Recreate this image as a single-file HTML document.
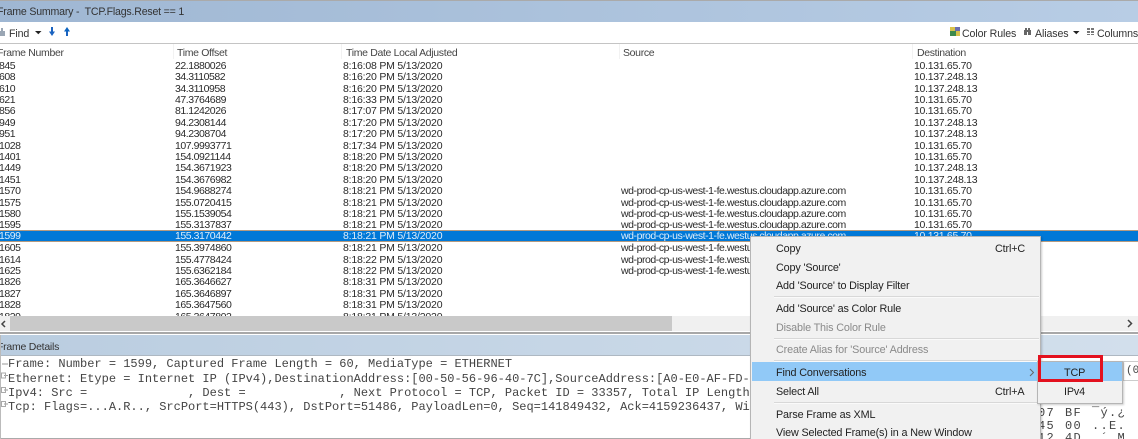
<!DOCTYPE html>
<html><head><meta charset="utf-8"><style>
html,body{margin:0;padding:0;background:#fff}
#p{position:relative;width:1138px;height:439px;overflow:hidden;background:#fff;font:10.5px "Liberation Sans",sans-serif;color:#2a2a2a;filter:blur(.25px)}
#p div{position:absolute;white-space:nowrap}
.r{left:0;width:1138px;height:11.4px;line-height:11.4px}
.r span{position:absolute;top:1.5px}
.a{left:-1px;letter-spacing:-.45px}.b{left:175px;letter-spacing:-.45px}.c{left:343px;letter-spacing:-.2px}.d{left:621px;letter-spacing:-.45px}.e{left:914px;letter-spacing:-.3px}
.s{background:#0078d7;color:#dcecf9;height:10px!important;border-top:1px solid #b49a80;border-bottom:1px solid #b49a80;overflow:hidden}
.s span{top:0!important}
#p .m{font:12px/14px "Liberation Mono",monospace;left:8px;color:#444;white-space:pre}
.h{top:47px;line-height:13px;color:#444;letter-spacing:-.33px}
.i{left:776px;font-size:10.8px;letter-spacing:-.15px;line-height:16px;color:#222}
.k{color:#8a8a8a}
.sp{left:774px;width:265px;height:1px;background:#d8d8d8;border-bottom:1px solid #fafafa}
.x{font:12px/14px "Liberation Mono",monospace;color:#444;letter-spacing:1.300px}
.t{top:26px;line-height:16px;color:#333;font-size:10.6px;letter-spacing:-.1px}
</style></head><body><div id="p">
<div style="left:0;top:0;width:1138px;height:1px;background:#aaa"></div>
<div style="left:0;top:1px;width:1138px;height:21px;background:linear-gradient(90deg,#9fb7d3,#b8cde5)"></div>
<div style="left:-3px;top:4px;font-size:10.6px;line-height:16px;color:#333;letter-spacing:-.2px;white-space:pre">Frame Summary -  TCP.Flags.Reset == 1</div>
<div style="left:0;top:22px;width:1138px;height:21px;background:#fff;border-bottom:1px solid #c4c4c4"></div>
<div class="t" style="left:9px">Find</div>
<svg style="position:absolute;left:0;top:0" width="1138" height="44">
<path d="M1 28h2v3h2v5H0v-5h1z" fill="#9aa6b4"/>
<path d="M35 31h6.500l-3.200 3.200z" fill="#222"/>
<path d="M52 27v5" stroke="#1a63c0" stroke-width="2"/><path d="M49 31.500h6l-3 4.500z" fill="#1a63c0"/>
<path d="M67 36v-5" stroke="#1a63c0" stroke-width="2"/><path d="M64 31.500h6l-3-4.500z" fill="#0a63c0"/>
<rect x="950" y="27" width="10" height="9" fill="#d8c24c"/><rect x="950" y="31" width="6" height="5" fill="#3d8a4c"/><rect x="955" y="27" width="5" height="4" fill="#6a6fb0"/>
<path d="M1025 28h2v2h1v-2h2v2h1v5h-3v-3h-1v3h-3v-5h1z" fill="#666"/>
<path d="M1073 31h6.500l-3.200 3.200z" fill="#222"/>
<path d="M1087 28h3v2h-3zM1091 28h3v2h-3zM1087 31h3v2h-3zM1091 31h3v2h-3zM1087 34h3v1h-3zM1091 34h3v1h-3z" fill="#777"/>
</svg>
<div class="t" style="left:962px">Color Rules</div>
<div class="t" style="left:1035px">Aliases</div>
<div class="t" style="left:1097px">Columns</div>

<div class="h" style="left:-3px">Frame Number</div>
<div class="h" style="left:177px">Time Offset</div>
<div class="h" style="left:346px">Time Date Local Adjusted</div>
<div class="h" style="left:623px">Source</div>
<div class="h" style="left:917px">Destination</div>
<div style="left:173px;top:44px;width:1px;height:15px;background:#f2f2f2"></div>
<div style="left:341px;top:44px;width:1px;height:15px;background:#f2f2f2"></div>
<div style="left:619px;top:44px;width:1px;height:15px;background:#f2f2f2"></div>
<div style="left:912px;top:44px;width:1px;height:15px;background:#f2f2f2"></div>

<div class="r" style="top:59.300px"><span class="a">845</span><span class="b">22.1880026</span><span class="c">8:16:08 PM 5/13/2020</span><span class="e">10.131.65.70</span></div>
<div class="r" style="top:70.700px"><span class="a">608</span><span class="b">34.3110582</span><span class="c">8:16:20 PM 5/13/2020</span><span class="e">10.137.248.13</span></div>
<div class="r" style="top:82.100px"><span class="a">610</span><span class="b">34.3110958</span><span class="c">8:16:20 PM 5/13/2020</span><span class="e">10.137.248.13</span></div>
<div class="r" style="top:93.500px"><span class="a">621</span><span class="b">47.3764689</span><span class="c">8:16:33 PM 5/13/2020</span><span class="e">10.131.65.70</span></div>
<div class="r" style="top:104.900px"><span class="a">856</span><span class="b">81.1242026</span><span class="c">8:17:07 PM 5/13/2020</span><span class="e">10.131.65.70</span></div>
<div class="r" style="top:116.300px"><span class="a">949</span><span class="b">94.2308144</span><span class="c">8:17:20 PM 5/13/2020</span><span class="e">10.137.248.13</span></div>
<div class="r" style="top:127.700px"><span class="a">951</span><span class="b">94.2308704</span><span class="c">8:17:20 PM 5/13/2020</span><span class="e">10.137.248.13</span></div>
<div class="r" style="top:139.100px"><span class="a">1028</span><span class="b">107.9993771</span><span class="c">8:17:34 PM 5/13/2020</span><span class="e">10.131.65.70</span></div>
<div class="r" style="top:150.500px"><span class="a">1401</span><span class="b">154.0921144</span><span class="c">8:18:20 PM 5/13/2020</span><span class="e">10.131.65.70</span></div>
<div class="r" style="top:161.900px"><span class="a">1449</span><span class="b">154.3671923</span><span class="c">8:18:20 PM 5/13/2020</span><span class="e">10.137.248.13</span></div>
<div class="r" style="top:173.300px"><span class="a">1451</span><span class="b">154.3676982</span><span class="c">8:18:20 PM 5/13/2020</span><span class="e">10.137.248.13</span></div>
<div class="r" style="top:184.700px"><span class="a">1570</span><span class="b">154.9688274</span><span class="c">8:18:21 PM 5/13/2020</span><span class="d">wd-prod-cp-us-west-1-fe.westus.cloudapp.azure.com</span><span class="e">10.131.65.70</span></div>
<div class="r" style="top:196.100px"><span class="a">1575</span><span class="b">155.0720415</span><span class="c">8:18:21 PM 5/13/2020</span><span class="d">wd-prod-cp-us-west-1-fe.westus.cloudapp.azure.com</span><span class="e">10.131.65.70</span></div>
<div class="r" style="top:207.500px"><span class="a">1580</span><span class="b">155.1539054</span><span class="c">8:18:21 PM 5/13/2020</span><span class="d">wd-prod-cp-us-west-1-fe.westus.cloudapp.azure.com</span><span class="e">10.131.65.70</span></div>
<div class="r" style="top:218.900px"><span class="a">1595</span><span class="b">155.3137837</span><span class="c">8:18:21 PM 5/13/2020</span><span class="d">wd-prod-cp-us-west-1-fe.westus.cloudapp.azure.com</span><span class="e">10.131.65.70</span></div>
<div class="r s" style="top:230px"><span class="a">1599</span><span class="b">155.3170442</span><span class="c">8:18:21 PM 5/13/2020</span><span class="d">wd-prod-cp-us-west-1-fe.westus.cloudapp.azure.com</span><span class="e">10.131.65.70</span></div>
<div class="r" style="top:241.700px"><span class="a">1605</span><span class="b">155.3974860</span><span class="c">8:18:21 PM 5/13/2020</span><span class="d">wd-prod-cp-us-west-1-fe.westus.cloudapp.azure.com</span></div>
<div class="r" style="top:253.100px"><span class="a">1614</span><span class="b">155.4778424</span><span class="c">8:18:22 PM 5/13/2020</span><span class="d">wd-prod-cp-us-west-1-fe.westus.cloudapp.azure.com</span></div>
<div class="r" style="top:264.500px"><span class="a">1625</span><span class="b">155.6362184</span><span class="c">8:18:22 PM 5/13/2020</span><span class="d">wd-prod-cp-us-west-1-fe.westus.cloudapp.azure.com</span></div>
<div class="r" style="top:275.900px"><span class="a">1826</span><span class="b">165.3646627</span><span class="c">8:18:31 PM 5/13/2020</span></div>
<div class="r" style="top:287.300px"><span class="a">1827</span><span class="b">165.3646897</span><span class="c">8:18:31 PM 5/13/2020</span></div>
<div class="r" style="top:298.700px"><span class="a">1828</span><span class="b">165.3647560</span><span class="c">8:18:31 PM 5/13/2020</span></div>
<div class="r" style="top:310.100px"><span class="a">1829</span><span class="b">165.3647802</span><span class="c">8:18:31 PM 5/13/2020</span></div>

<div style="left:0;top:316px;width:1138px;height:15px;background:#f0f0f0"></div>
<div style="left:10px;top:316px;width:662px;height:15px;background:#c9c9c9"></div>
<svg style="position:absolute;left:0;top:316px" width="1138" height="15"><path d="M5 5l-3 3 3 3M1128 4l3.500 3.500-3.500 3.500" fill="none" stroke="#444" stroke-width="1.500"/></svg>
<div style="left:0;top:332px;width:1138px;height:2px;background:#a8a8a8;border-bottom:1px solid #fff"></div>
<div style="left:0;top:335px;width:1138px;height:20px;background:linear-gradient(90deg,#bacde0,#d2dfec);border-bottom:1px solid #aeb8c2"></div>
<div style="left:-3px;top:339px;font-size:10.5px;letter-spacing:-.25px;line-height:17px;color:#333">Frame Details</div>

<div class="m" style="top:357px">Frame: Number = 1599, Captured Frame Length = 60, MediaType = ETHERNET</div>
<div class="m" style="top:371.500px">Ethernet: Etype = Internet IP (IPv4),DestinationAddress:[00-50-56-96-40-7C],SourceAddress:[A0-E0-AF-FD-</div>
<div class="m" style="top:386px">Ipv4: Src =              , Dest =             , Next Protocol = TCP, Packet ID = 33357, Total IP Length</div>
<div class="m" style="top:400px">Tcp: Flags=...A.R.., SrcPort=HTTPS(443), DstPort=51486, PayloadLen=0, Seq=141849432, Ack=4159236437, Wi</div>
<svg style="position:absolute;left:0;top:356px" width="10" height="60"><path d="M2 8h6M4 19.500h4M4 34h4M4 48h4" stroke="#999"/><rect x="1.500" y="17" width="4" height="5" fill="none" stroke="#aaa"/><rect x="1.500" y="31.500" width="4" height="5" fill="none" stroke="#aaa"/><rect x="1.500" y="45.500" width="4" height="5" fill="none" stroke="#aaa"/></svg>
<div style="left:0;top:438px;width:1138px;height:1px;background:#aaa"></div>
<div style="left:0;top:335px;width:1px;height:104px;background:#bbb"></div>

<div style="left:1041px;top:402px;width:97px;height:37px;background:#fff"></div>
<div class="x" style="left:1038px;top:406px">07</div><div class="x" style="left:1065px;top:406px">BF</div><div class="x" style="left:1092px;top:406px">¯ý.¿</div>
<div class="x" style="left:1038px;top:419px">45</div><div class="x" style="left:1065px;top:419px">00</div><div class="x" style="left:1092px;top:419px">..E.</div>
<div class="x" style="left:1038px;top:431px">12</div><div class="x" style="left:1065px;top:431px">4D</div><div class="x" style="left:1092px;top:431px">.´.M</div>
<div style="left:1123px;top:361px;width:15px;height:20px;background:#fff;border:1px solid #ccc;border-right:0;box-sizing:border-box"></div>
<div class="x" style="left:1126px;top:364px;font-size:11px;letter-spacing:0">(0:</div>

<div style="left:750px;top:236px;width:291px;height:203px;background:#f1f1f1;border:1px solid #b5b5b5;border-bottom:0;box-sizing:border-box;box-shadow:1px 1px 2px rgba(0,0,0,.2)"></div>
<div class="i" style="top:241px">Copy</div><div class="i" style="top:241px;left:995px">Ctrl+C</div>
<div class="i" style="top:260px">Copy 'Source'</div>
<div class="i" style="top:278px">Add 'Source' to Display Filter</div>
<div class="sp" style="top:296px"></div>
<div class="i" style="top:301px">Add 'Source' as Color Rule</div>
<div class="i k" style="top:320px">Disable This Color Rule</div>
<div class="sp" style="top:338px"></div>
<div class="i k" style="top:342px">Create Alias for 'Source' Address</div>
<div class="sp" style="top:360px"></div>
<div style="left:752px;top:362px;width:286px;height:19px;background:#91c9f7"></div>
<div class="i" style="top:365px">Find Conversations</div>
<svg style="position:absolute;left:1028px;top:368px" width="8" height="10"><path d="M2 1l3.500 3.500L2 8" fill="none" stroke="#666"/></svg>
<div class="i" style="top:384px">Select All</div><div class="i" style="top:384px;left:995px">Ctrl+A</div>
<div class="sp" style="top:402px"></div>
<div class="i" style="top:407px">Parse Frame as XML</div>
<div class="i" style="top:425px">View Selected Frame(s) in a New Window</div>

<div style="left:1037px;top:361px;width:86px;height:43px;background:#f1f1f1;border:1px solid #b5b5b5;box-sizing:border-box;box-shadow:1px 1px 2px rgba(0,0,0,.2)"></div>
<div style="left:1040px;top:362px;width:82px;height:19px;background:#91c9f7"></div>
<div class="i" style="left:1064px;top:365px">TCP</div>
<div class="i" style="left:1064px;top:384px">IPv4</div>
<div style="left:1038px;top:355px;width:65px;height:27px;border:3px solid #e3111f;box-sizing:border-box"></div>
</div></body></html>
